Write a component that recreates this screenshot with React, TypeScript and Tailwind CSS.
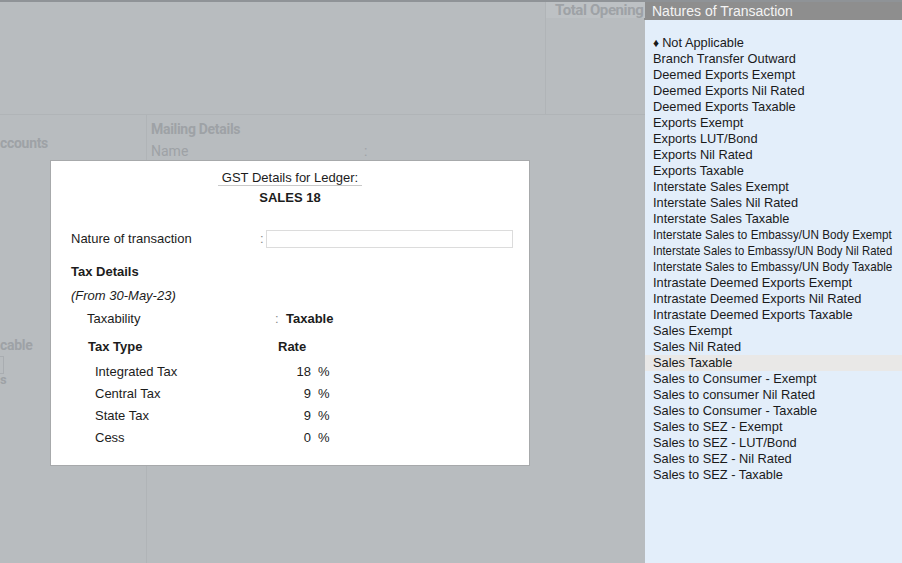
import React from 'react'

const natures = [
  'Branch Transfer Outward',
  'Deemed Exports Exempt',
  'Deemed Exports Nil Rated',
  'Deemed Exports Taxable',
  'Exports Exempt',
  'Exports LUT/Bond',
  'Exports Nil Rated',
  'Exports Taxable',
  'Interstate Sales Exempt',
  'Interstate Sales Nil Rated',
  'Interstate Sales Taxable',
  'Interstate Sales to Embassy/UN Body Exempt',
  'Interstate Sales to Embassy/UN Body Nil Rated',
  'Interstate Sales to Embassy/UN Body Taxable',
  'Intrastate Deemed Exports Exempt',
  'Intrastate Deemed Exports Nil Rated',
  'Intrastate Deemed Exports Taxable',
  'Sales Exempt',
  'Sales Nil Rated',
  'Sales Taxable',
  'Sales to Consumer - Exempt',
  'Sales to consumer Nil Rated',
  'Sales to Consumer - Taxable',
  'Sales to SEZ - Exempt',
  'Sales to SEZ - LUT/Bond',
  'Sales to SEZ - Nil Rated',
  'Sales to SEZ - Taxable',
]

const taxRows = [
  { label: 'Integrated Tax', rate: '18' },
  { label: 'Central Tax', rate: '9' },
  { label: 'State Tax', rate: '9' },
  { label: 'Cess', rate: '0' },
]

function GstDialog() {
  return (
    <div className="absolute left-[50px] top-[158px] w-[480px] h-[306px] bg-white border border-[#a7a9ab] text-[13px] font-normal text-[#1c1c1c] font-['Liberation_Sans',Arial,sans-serif]">
      {/* Title */}
      <div className="flex justify-center mt-[8px]">
        <div className="px-[4px] h-[17px] leading-[17px] border-b border-[#c9c9c9]">GST Details for Ledger:</div>
      </div>
      <div className="mt-[4px] h-[16px] leading-[16px] text-center font-bold">SALES 18</div>

      <div className="pl-[20px]">
        {/* Nature of transaction */}
        <div className="mt-[24px] flex items-center h-[18px]">
          <div className="w-[189px]">Nature of transaction</div>
          <div className="w-[6px] text-[#8a8a8a]">:</div>
          <div className="w-[247px] h-[18px] border border-[#dcdcdc]" />
        </div>

        <div className="mt-[16px] h-[16px] leading-[16px] font-bold">Tax Details</div>
        <div className="mt-[8px] h-[16px] leading-[16px] italic">(From 30-May-23)</div>

        {/* Taxability */}
        <div className="mt-[7px] flex h-[16px] leading-[16px] pl-[16px]">
          <div className="w-[188px]">Taxability</div>
          <div className="w-[11px] text-[#8a8a8a]">:</div>
          <div className="font-bold">Taxable</div>
        </div>

        {/* Tax type table */}
        <div className="mt-[12px] flex h-[16px] leading-[16px] pl-[17px] font-bold">
          <div className="w-[190px]">Tax Type</div>
          <div>Rate</div>
        </div>
        <div className="mt-[6px] pl-[24px]">
          {taxRows.map((row) => (
            <div key={row.label} className="flex h-[22px] leading-[22px]">
              <div className="w-[160px]">{row.label}</div>
              <div className="w-[56px] text-right">{row.rate}</div>
              <div className="pl-[7px]">%</div>
            </div>
          ))}
        </div>
      </div>
    </div>
  )
}

function NaturesPanel() {
  return (
    <div className="w-[257px] flex flex-col font-['Liberation_Sans',Arial,sans-serif]">
      <div className="h-[18px] leading-[18px] bg-[#8e8e8e] text-[#f4f4f4] text-[14px] pl-[8px] -ml-[1px]">
        Natures of Transaction
      </div>
      <div className="flex-1 bg-[#e3eefa] pt-[15px] text-[12.8px] text-[#1a1a1a]">
        <div className="h-[16px] leading-[16px] pl-[8px] flex items-center">
          <span className="text-[12px] mr-[3px] leading-none">♦</span>
          <span>Not Applicable</span>
        </div>
        {natures.map((n) => (
          <div
            key={n}
            className={
              n === 'Sales Taxable'
                ? 'h-[16px] leading-[16px] pl-[8px] whitespace-nowrap bg-[#e9e8e7]'
                : 'h-[16px] leading-[16px] pl-[8px] whitespace-nowrap'
            }
          >
            {n.includes('Nil Rated') && n.includes('Embassy') ? (
              <span className="inline-block origin-left scale-x-[0.885]">{n}</span>
            ) : n.includes('Embassy') ? (
              <span className="inline-block origin-left scale-x-[0.915]">{n}</span>
            ) : (
              n
            )}
          </div>
        ))}
      </div>
    </div>
  )
}

export default function App() {
  return (
    <div className="w-[902px] h-[563px] overflow-hidden flex bg-[#b8bcbf] border-t-2 border-[#8f9397]">
      {/* Faded ledger screen behind the dialog */}
      <div className="relative flex-1 flex flex-col font-['Roboto',Arial,sans-serif] text-[#9ea2a6] font-bold">
        <div className="h-[113px] flex border-b border-[#b0b4b7]">
          <div className="flex-1" />
          <div className="w-[100px] border-l border-[#b0b4b7]">
            <div className="h-[16px] leading-[16px] bg-[#bdc1c4] text-[15px] pl-[9px] tracking-[-0.4px] whitespace-nowrap">
              Total Opening
            </div>
          </div>
        </div>
        <div className="flex-1 flex">
          <div className="w-[147px] border-r border-[#b0b4b7]">
            <div className="mt-[18px] text-[14px] tracking-[-0.3px]">ccounts</div>
            <div className="mt-[181px] text-[14px] tracking-[-0.3px]">cable</div>
            <div className="w-[4px] h-[18px] border-y border-r border-[#a9adb1]" />
            <div className="text-[13px] leading-[12px]">s</div>
          </div>
          <div className="pl-[4px] pt-[6px]">
            <div className="h-[16px] leading-[16px] text-[14px] tracking-[-0.3px]">Mailing Details</div>
            <div className="mt-[6px] flex h-[16px] leading-[16px] text-[14px] font-normal">
              <div className="w-[213px]">Name</div>
              <div>:</div>
            </div>
          </div>
        </div>
        <GstDialog />
      </div>
      <NaturesPanel />
    </div>
  )
}
